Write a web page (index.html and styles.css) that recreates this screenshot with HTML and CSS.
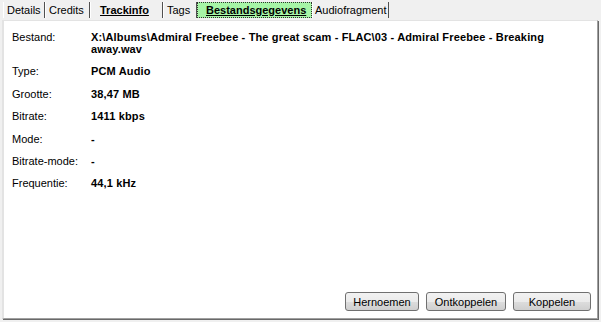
FILE: index.html
```html
<!DOCTYPE html>
<html>
<head>
<meta charset="utf-8">
<link rel="stylesheet" href="styles.css">
</head>
<body>
<div class="window">
  <div class="tabs">
    <div class="tab tab-details">Details</div>
    <div class="tab tab-credits">Credits</div>
    <div class="tab tab-bold">Trackinfo</div>
    <div class="tab tab-tags">Tags</div>
    <div class="tab tab-active">Bestandsgegevens</div>
    <div class="tab tab-audio">Audiofragment</div>
  </div>
  <div class="panel">
    <div class="rows">
      <div class="row"><div class="label">Bestand:</div><div class="value">X:\Albums\Admiral Freebee - The great scam - FLAC\03 - Admiral Freebee - Breaking away.wav</div></div>
      <div class="row"><div class="label">Type:</div><div class="value">PCM Audio</div></div>
      <div class="row"><div class="label">Grootte:</div><div class="value">38,47 MB</div></div>
      <div class="row"><div class="label">Bitrate:</div><div class="value">1411 kbps</div></div>
      <div class="row"><div class="label">Mode:</div><div class="value">-</div></div>
      <div class="row"><div class="label">Bitrate-mode:</div><div class="value">-</div></div>
      <div class="row"><div class="label">Frequentie:</div><div class="value">44,1 kHz</div></div>
    </div>
    <div class="buttons">
      <button class="btn btn-rename">Hernoemen</button>
      <button class="btn btn-unlink">Ontkoppelen</button>
      <button class="btn btn-link">Koppelen</button>
    </div>
  </div>
</div>
</body>
</html>
```
FILE: styles.css
```css
html, body {
  margin: 0;
  padding: 0;
  background: #f0f0f0;
}
.window {
  width: 601px;
  height: 322px;
  font-family: "Liberation Sans", Arial, sans-serif;
  font-size: 11px;
  color: #000;
  display: flex;
  flex-direction: column;
}
.tabs {
  display: flex;
  padding: 2px 0 0 3px;
  height: 18px;
  box-sizing: border-box;
}
.tab {
  box-sizing: border-box;
  height: 16px;
  line-height: 16px;
  padding-left: 3px;
  border-left: 1px solid #ffffff;
  border-right: 1px solid #505050;
  color: #000;
  white-space: nowrap;
}
.tab-details { width: 42px; padding-left: 3px; }
.tab-credits { width: 45px; padding-left: 3px; }
.tab-bold {
  width: 73px;
  padding-left: 9px;
  font-weight: bold;
  text-decoration: underline;
}
.tab-tags { width: 34px; padding-left: 3px; }
.tab-active {
  width: 115px;
  padding-left: 8px;
  font-weight: bold;
  text-decoration: underline;
  background: #a6f5a6;
  border: 1px dotted #303030;
  line-height: 14px;
}
.tab-audio { width: 77px; padding-left: 2px; }
.panel {
  flex: 1;
  margin: 2px 3px 3px 2px;
  background: #fff;
  border-top: 1px solid #e3e3e3;
  border-left: 2px solid #e3e3e3;
  border-right: 1px solid #a0a0a0;
  border-bottom: 1px solid #a0a0a0;
  box-shadow: 1px 1px 0 #696969;
  display: flex;
  flex-direction: column;
  justify-content: space-between;
}
.rows {
  padding: 10px 0 0 8px;
  display: flex;
  flex-direction: column;
  gap: 10.4px;
}
.row {
  display: flex;
  line-height: 12px;
}
.label {
  width: 79px;
  flex: none;
}
.value {
  font-weight: bold;
  width: 495px;
  letter-spacing: 0.15px;
}
.buttons {
  display: flex;
  justify-content: flex-end;
  gap: 7px;
  padding: 0 6px 7px 0;
}
.btn {
  font-family: "Liberation Sans", Arial, sans-serif;
  font-size: 11px;
  height: 19px;
  padding: 0;
  border: 1px solid #707070;
  border-radius: 3px;
  background: linear-gradient(#f2f2f2 0%, #ebebeb 50%, #dddddd 51%, #cfcfcf 100%);
  color: #000;
}
.btn-rename { width: 74px; }
.btn-unlink { width: 80px; }
.btn-link { width: 78px; }
```
